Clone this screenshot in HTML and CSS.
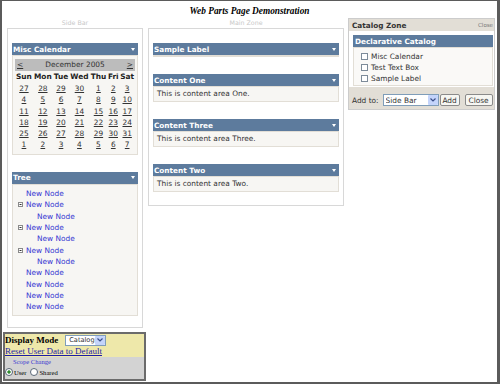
FILE: index.html
```html
<!DOCTYPE html>
<html lang="en">
<head>
  <meta charset="UTF-8">
  <title>Web Parts Page Demonstration</title>
  <link rel="stylesheet" href="styles.css">
</head>
<body>
  <div class="frame">
    <h1 class="title">Web Parts Page Demonstration</h1>

    <div class="zones">
      <!-- Side Bar zone -->
      <div class="side">
        <div class="zone-label">Side Bar</div>
        <div class="zone">
          <div class="part">
            <div class="part-title"><span>Misc Calendar</span><svg class="verb" width="4" height="3" viewBox="0 0 4 3"><polygon points="0,0 4,0 2,3" fill="#fff"/></svg></div>
            <div class="part-body cal-body">
              <table class="calendar">
                <tr class="cal-nav">
                  <td colspan="7"><div class="nav-row"><a>&lt;</a><span>December 2005</span><a>&gt;</a></div></td>
                </tr>
                <tr>
                  <th>Sun</th><th>Mon</th><th>Tue</th><th>Wed</th><th>Thu</th><th>Fri</th><th>Sat</th>
                </tr>
                <tr><td><a>27</a></td><td><a>28</a></td><td><a>29</a></td><td><a>30</a></td><td><a>1</a></td><td><a>2</a></td><td><a>3</a></td></tr>
                <tr><td><a>4</a></td><td><a>5</a></td><td><a>6</a></td><td><a>7</a></td><td><a>8</a></td><td><a>9</a></td><td><a>10</a></td></tr>
                <tr><td><a>11</a></td><td><a>12</a></td><td><a>13</a></td><td><a>14</a></td><td><a>15</a></td><td><a>16</a></td><td><a>17</a></td></tr>
                <tr><td><a>18</a></td><td><a>19</a></td><td><a>20</a></td><td><a>21</a></td><td><a>22</a></td><td><a>23</a></td><td><a>24</a></td></tr>
                <tr><td><a>25</a></td><td><a>26</a></td><td><a>27</a></td><td><a>28</a></td><td><a>29</a></td><td><a>30</a></td><td><a>31</a></td></tr>
                <tr><td><a>1</a></td><td><a>2</a></td><td><a>3</a></td><td><a>4</a></td><td><a>5</a></td><td><a>6</a></td><td><a>7</a></td></tr>
              </table>
            </div>
          </div>

          <div class="part">
            <div class="part-title"><span>Tree</span><svg class="verb" width="4" height="3" viewBox="0 0 4 3"><polygon points="0,0 4,0 2,3" fill="#fff"/></svg></div>
            <div class="part-body tree-body">
              <ul class="tree">
                <li class="node"><a>New Node</a></li>
                <li class="node open"><svg class="ico" width="5" height="5" viewBox="0 0 5 5"><rect x=".5" y=".5" width="4" height="4" fill="#fff" stroke="#8a8a8a"/><line x1="1.5" y1="2.5" x2="3.5" y2="2.5" stroke="#333"/></svg><a>New Node</a></li>
                <li class="node child"><a>New Node</a></li>
                <li class="node open"><svg class="ico" width="5" height="5" viewBox="0 0 5 5"><rect x=".5" y=".5" width="4" height="4" fill="#fff" stroke="#8a8a8a"/><line x1="1.5" y1="2.5" x2="3.5" y2="2.5" stroke="#333"/></svg><a>New Node</a></li>
                <li class="node child"><a>New Node</a></li>
                <li class="node open"><svg class="ico" width="5" height="5" viewBox="0 0 5 5"><rect x=".5" y=".5" width="4" height="4" fill="#fff" stroke="#8a8a8a"/><line x1="1.5" y1="2.5" x2="3.5" y2="2.5" stroke="#333"/></svg><a>New Node</a></li>
                <li class="node child"><a>New Node</a></li>
                <li class="node"><a>New Node</a></li>
                <li class="node"><a>New Node</a></li>
                <li class="node"><a>New Node</a></li>
                <li class="node"><a>New Node</a></li>
              </ul>
            </div>
          </div>
        </div>
      </div>

      <!-- Main zone -->
      <div class="main">
        <div class="zone-label">Main Zone</div>
        <div class="zone">
          <div class="part">
            <div class="part-title"><span>Sample Label</span><svg class="verb" width="4" height="3" viewBox="0 0 4 3"><polygon points="0,0 4,0 2,3" fill="#fff"/></svg></div>
            <div class="part-body"></div>
          </div>
          <div class="part">
            <div class="part-title"><span>Content One</span><svg class="verb" width="4" height="3" viewBox="0 0 4 3"><polygon points="0,0 4,0 2,3" fill="#fff"/></svg></div>
            <div class="part-body text-body">This is content area One.</div>
          </div>
          <div class="part">
            <div class="part-title"><span>Content Three</span><svg class="verb" width="4" height="3" viewBox="0 0 4 3"><polygon points="0,0 4,0 2,3" fill="#fff"/></svg></div>
            <div class="part-body text-body">This is content area Three.</div>
          </div>
          <div class="part">
            <div class="part-title"><span>Content Two</span><svg class="verb" width="4" height="3" viewBox="0 0 4 3"><polygon points="0,0 4,0 2,3" fill="#fff"/></svg></div>
            <div class="part-body text-body">This is content area Two.</div>
          </div>
        </div>
      </div>

      <!-- Catalog zone -->
      <div class="catalog">
        <div class="cz-head"><b>Catalog Zone</b><span class="cz-close">Close</span></div>
        <div class="cz-inner">
          <div class="part-title cz-title">Declarative Catalog</div>
          <div class="cz-list">
            <label><input type="checkbox"> Misc Calendar</label>
            <label><input type="checkbox"> Test Text Box</label>
            <label><input type="checkbox"> Sample Label</label>
          </div>
        </div>
        <div class="cz-foot">
          <span class="add-to">Add to:</span>
          <span class="select zone-select">
            <select><option>Side Bar</option><option>Main Zone</option></select>
            <span class="arrow"><svg width="6" height="4" viewBox="0 0 6 4"><polyline points="0.5,0.5 3,3 5.5,0.5" fill="none" stroke="#3b4f8a" stroke-width="1.2"/></svg></span>
          </span>
          <button class="btn btn-add">Add</button>
          <button class="btn btn-close">Close</button>
        </div>
      </div>
    </div>

    <!-- Display mode panel -->
    <div class="display-mode">
      <div class="dm-top">
        <div class="dm-row">
          <b>Display Mode</b>
          <span class="select mode-select">
            <select><option>Catalog</option><option>Browse</option><option>Design</option></select>
            <span class="arrow"><svg width="6" height="4" viewBox="0 0 6 4"><polyline points="0.5,0.5 3,3 5.5,0.5" fill="none" stroke="#3b4f8a" stroke-width="1.2"/></svg></span>
          </span>
        </div>
        <a class="dm-reset">Reset User Data to Default</a>
      </div>
      <div class="dm-bottom">
        <div class="scope-title">Scope Change</div>
        <div class="scope-row">
          <label><input type="radio" name="scope" checked>User</label>
          <label><input type="radio" name="scope">Shared</label>
        </div>
      </div>
    </div>
  </div>
</body>
</html>
```

FILE: styles.css
```css
body {
  margin: 0;
}

.frame {
  box-sizing: border-box;
  width: 500px;
  height: 384px;
  border-style: solid;
  border-color: #5b5b5b;
  border-width: 1px 3px 2px 2px;
  background: #fff;
  font-family: "DejaVu Sans", Verdana, sans-serif;
  color: #333;
  overflow: hidden;
}

.title {
  margin: 0;
  padding-top: 4px;
  height: 12px;
  text-align: center;
  font: italic bold 9.3px/12px "Liberation Serif", serif;
  color: #000;
}

.zones {
  display: flex;
  align-items: flex-start;
  margin-top: 1px;
  padding-left: 5px;
}

.side {
  width: 136px;
}

.main {
  width: 196px;
  margin-left: 5px;
}

.zone-label {
  height: 10px;
  line-height: 10px;
  text-align: center;
  font-size: 6.3px;
  color: #c8c8c8;
}

.zone {
  border: 1px solid #d8d8d8;
  padding: 14px 4px 11px;
}

.main .zone {
  padding-bottom: 13px;
}

.part + .part {
  margin-top: 17px;
}

.part-title {
  display: flex;
  justify-content: space-between;
  align-items: center;
  height: 12px;
  padding: 0 3px 0 1px;
  background: #5d7b9d;
  color: #fff;
  font-weight: bold;
  font-size: 7.3px;
}

.verb {
  display: block;
}

.part-body {
  border: 1px solid #e2ded6;
  background: #f7f6f3;
  font-size: 7.4px;
}

.text-body {
  padding-left: 3px;
  line-height: 14px;
}

/* calendar */
.cal-body {
  padding: 3px 2px 3px;
}

.calendar {
  width: 100%;
  border-collapse: collapse;
}

.calendar td,
.calendar th {
  padding: 0;
  text-align: center;
  line-height: 11.3px;
}

.calendar th {
  line-height: 12px;
  color: #222;
}

.calendar a {
  color: #333;
  text-decoration: underline;
}

.cal-nav td {
  background: #bcbcbc;
  line-height: 12px;
}

.nav-row {
  display: flex;
  justify-content: space-between;
  padding: 0 2px;
}

/* tree */
.tree-body {
  padding: 3px 0 3px;
}

.tree {
  list-style: none;
  margin: 0;
  padding: 0;
}

.tree .node {
  display: flex;
  align-items: center;
  height: 11.33px;
  padding-left: 13px;
}

.tree .node.open {
  padding-left: 5px;
}

.tree .node.child {
  padding-left: 24px;
}

.tree .ico {
  flex: none;
  margin-right: 3px;
}

.tree a {
  color: #3535d2;
}

/* catalog zone */
.catalog {
  width: 147px;
  margin-left: 4px;
  box-sizing: border-box;
  border: 1px solid #cccccc;
  background: #fff;
}

.cz-head {
  display: flex;
  justify-content: space-between;
  align-items: center;
  height: 12px;
  padding: 0 1px 0 3px;
  background: #e2ded6;
  font-size: 7.3px;
  color: #333;
}

.cz-close {
  font-size: 5.5px;
  color: #777;
}

.cz-inner {
  padding: 4px 1px 1px 4px;
}

.cz-title {
  padding-left: 2px;
}

.cz-list {
  border: 1px solid #e2ded6;
  background: #faf9f7;
  padding: 3px 0 1px 7px;
}

.cz-list label {
  display: flex;
  align-items: center;
  height: 11px;
  font-size: 7.4px;
  color: #333;
}

.cz-list input {
  appearance: none;
  width: 7px;
  height: 7px;
  margin: 0 3px 0 0;
  border: 1px solid #7d8b99;
  background: #fff;
}

.cz-foot {
  display: flex;
  align-items: center;
  padding: 7px 0 3px 3px;
  background: #e2ded6;
  font-size: 7.4px;
  color: #333;
  white-space: nowrap;
}

.cz-foot > * {
  flex: none;
}

/* dropdowns */
.select {
  position: relative;
  display: inline-block;
}

.select select {
  appearance: none;
  display: block;
  box-sizing: border-box;
  height: 12px;
  margin: 0;
  padding: 0 0 0 2px;
  border: 1px solid #7f9db9;
  background: #fff;
  font-family: "DejaVu Sans", Verdana, sans-serif;
  font-size: 7.4px;
  color: #333;
}

.select .arrow {
  position: absolute;
  top: 1px;
  right: 1px;
  width: 10px;
  height: 10px;
  display: flex;
  align-items: center;
  justify-content: center;
  background: #c4d4fb;
  border-radius: 1px;
}

.zone-select {
  margin-left: 4px;
}

.zone-select select {
  width: 56px;
}

.btn {
  height: 12px;
  padding: 0;
  border: 1px solid #8a8a8a;
  border-radius: 2px;
  background: #f6f6f2;
  font-family: "DejaVu Sans", Verdana, sans-serif;
  font-size: 7.4px;
  color: #333;
}

.btn-add {
  width: 20px;
  margin-left: 1px;
}

.btn-close {
  width: 28px;
  margin-left: 5px;
}

/* display mode panel */
.display-mode {
  box-sizing: border-box;
  width: 143px;
  margin: 4px 0 0 1px;
  border: 2px solid #6b6b6b;
  font-family: "Liberation Serif", serif;
}

.dm-top {
  background: #eee8aa;
}

.dm-row {
  display: flex;
  align-items: center;
  height: 12px;
  font-size: 9px;
  color: #000;
}

.mode-select {
  margin-left: 7px;
}

.mode-select select {
  width: 41px;
  height: 11px;
  font-size: 6.6px;
  padding-left: 3px;
}

.mode-select .arrow {
  height: 9px;
}

.dm-reset {
  display: block;
  line-height: 11px;
  font-size: 9px;
  color: #1c1ca8;
  text-decoration: underline;
}

.dm-bottom {
  background: #d3d3d3;
  padding-bottom: 2px;
  font-size: 6.6px;
}

.scope-title {
  line-height: 10px;
  padding-left: 8px;
  color: #3a3ad0;
}

.scope-row {
  display: flex;
  align-items: center;
  height: 10px;
  color: #000;
}

.scope-row label {
  display: flex;
  align-items: center;
  margin-right: 4px;
}

.scope-row input {
  appearance: none;
  width: 8px;
  height: 8px;
  margin: 0 1px 0 0;
  border: 1px solid #5a6878;
  border-radius: 50%;
  background: #fff;
}

.scope-row input:checked {
  background: radial-gradient(circle, #2f8a2f 0 1.4px, #fff 1.9px);
}
```
